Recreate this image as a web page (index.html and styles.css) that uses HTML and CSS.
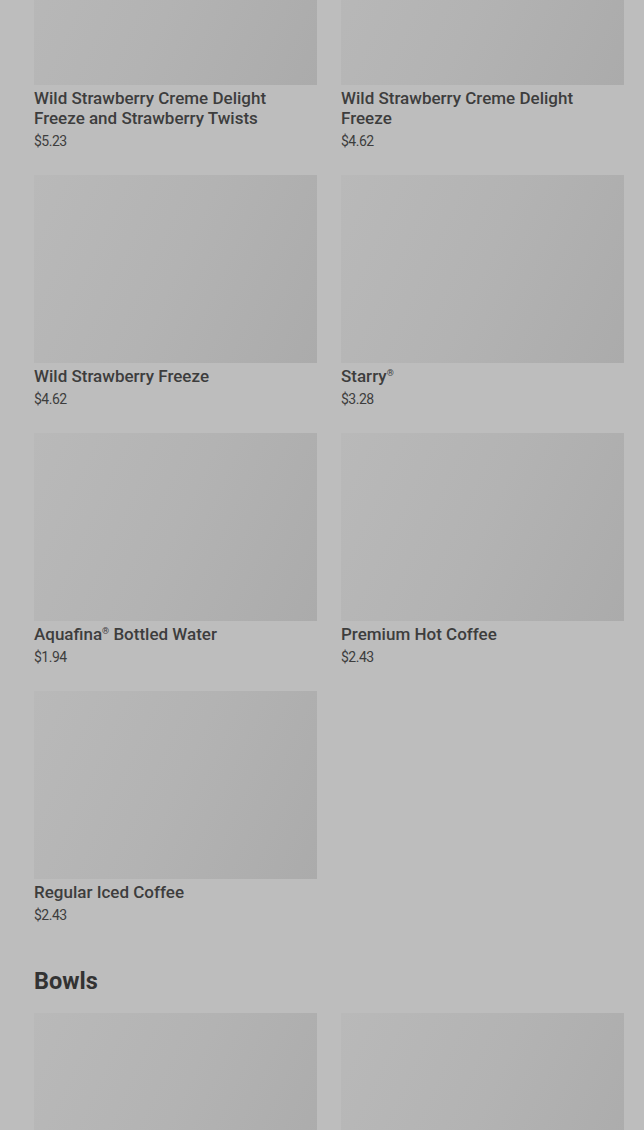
FILE: index.html
```html
<!DOCTYPE html>
<html lang="en">
<head>
  <meta charset="UTF-8">
  <meta name="viewport" content="width=device-width, initial-scale=1.0">
  <title>Menu</title>
  <link rel="stylesheet" href="styles.css">
</head>
<body>
  <div class="menu">
    <section class="category">
      <div class="grid">
        <div class="item">
          <div class="thumb"></div>
          <div class="name">Wild Strawberry Creme Delight Freeze and Strawberry Twists</div>
          <div class="price">$5.23</div>
        </div>
        <div class="item">
          <div class="thumb"></div>
          <div class="name">Wild Strawberry Creme Delight Freeze</div>
          <div class="price">$4.62</div>
        </div>
        <div class="item">
          <div class="thumb"></div>
          <div class="name">Wild Strawberry Freeze</div>
          <div class="price">$4.62</div>
        </div>
        <div class="item">
          <div class="thumb"></div>
          <div class="name">Starry<sup>®</sup></div>
          <div class="price">$3.28</div>
        </div>
        <div class="item">
          <div class="thumb"></div>
          <div class="name">Aquafina<sup>®</sup> Bottled Water</div>
          <div class="price">$1.94</div>
        </div>
        <div class="item">
          <div class="thumb"></div>
          <div class="name">Premium Hot Coffee</div>
          <div class="price">$2.43</div>
        </div>
        <div class="item">
          <div class="thumb"></div>
          <div class="name">Regular Iced Coffee</div>
          <div class="price">$2.43</div>
        </div>
      </div>
    </section>

    <section class="category">
      <h2>Bowls</h2>
      <div class="grid">
        <div class="item">
          <div class="thumb"></div>
        </div>
        <div class="item">
          <div class="thumb"></div>
        </div>
      </div>
    </section>
  </div>
</body>
</html>
```

FILE: styles.css
```css
body {
  font-family: Roboto, "Liberation Sans", sans-serif;
  margin: 0;
  padding: 0;
  background-color: #bdbdbd;
  color: #333;
  overflow: hidden;
}
.menu {
  margin-top: -103px;
  padding: 0 20px 0 34px;
}
.category {
  margin-bottom: 41px;
}
.grid {
  display: grid;
  grid-template-columns: 1fr 1fr;
  column-gap: 24px;
  row-gap: 24px;
  align-items: start;
}
.thumb {
  height: 188px;
  background: linear-gradient(115deg, #b9b9b9 0%, #b3b3b3 50%, #ababab 100%);
}
.name {
  margin-top: 3px;
  font-size: 17px;
  font-weight: 500;
  line-height: 20px;
  color: #3d3d3d;
}
.name sup {
  font-size: 9px;
  line-height: 0;
  vertical-align: 6px;
}
.price {
  margin-top: 3px;
  font-size: 14px;
  line-height: 20px;
  color: #3d3d3d;
  letter-spacing: -0.5px;
}
h2 {
  margin: 0 0 17px;
  font-size: 23.5px;
  line-height: 30px;
  font-weight: 700;
  color: #333;
}
```
